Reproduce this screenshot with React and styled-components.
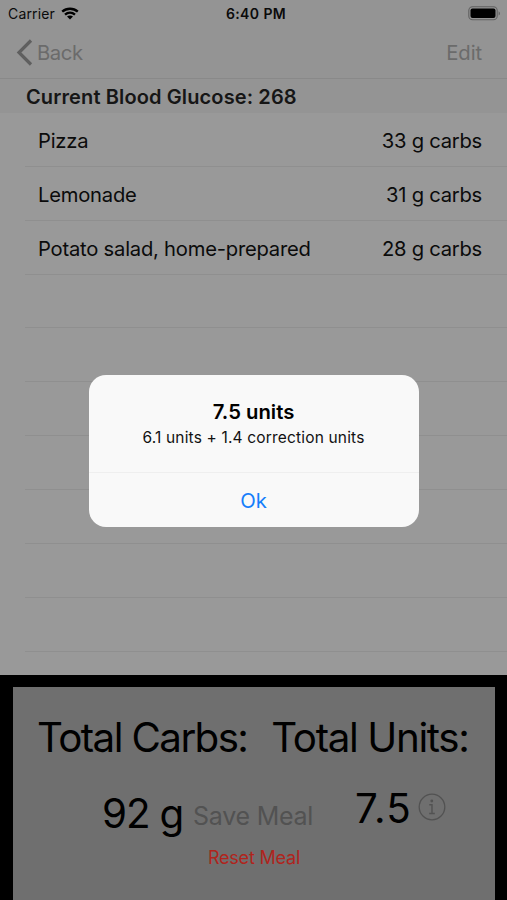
import styled, { createGlobalStyle } from "styled-components"

const GlobalStyle = createGlobalStyle`
    * {
        box-sizing: border-box;
    }
    body {
        margin: 0;
        overflow: hidden;
        font-family: "Inter", "Liberation Sans", sans-serif;
        background-color: #000;
    }
`
const Screen = styled.div`
    width: 507px;
    height: 900px;
    display: flex;
    flex-direction: column;
    position: relative;
    overflow: hidden;
    color: #0b0b0b;
    background-color: #999;
    white-space: nowrap;
`
const StatusBar = styled.div`
    height: 27px;
    display: grid;
    grid-template-columns: 1fr auto 1fr;
    align-items: center;
    padding: 0 6px 0 8px;
    background-color: #949494;
    font-size: 14px;
    line-height: 27px;
`
const Carrier = styled.div`
    display: flex;
    align-items: center;
    gap: 6px;
    letter-spacing: 0.15px;
`
const Time = styled.div`
    padding-left: 3px;
    font-size: 14px;
    font-weight: 600;
    letter-spacing: 0.4px;
`
const Battery = styled.svg`
    justify-self: end;
`
const NavBar = styled.div`
    height: 52px;
    display: flex;
    align-items: center;
    justify-content: space-between;
    padding: 0 25px 0 16px;
    border-bottom: 1px solid #898989;
    background-color: #949494;
`
const NavButton = styled.button`
    display: flex;
    align-items: center;
    gap: 4px;
    padding: 0;
    border: none;
    background: none;
    font-family: inherit;
    font-size: 20.3px;
    line-height: 50px;
    letter-spacing: ${props => props.spacing};
    color: #6b6b6b;
`
const SectionHeader = styled.div`
    height: 34px;
    flex-shrink: 0;
    padding-left: 26px;
    font-size: 20px;
    font-weight: 600;
    line-height: 36px;
    letter-spacing: 0.12px;
    color: #161616;
    background-color: #949494;
`
const List = styled.div`
    height: 562px;
    flex-shrink: 0;
    padding-left: 25px;
`
const Row = styled.div`
    height: 53.86px;
    display: flex;
    justify-content: space-between;
    padding: 1px 25px 0 13px;
    border-bottom: 1px solid #8f8f8f;
    font-size: 20.2px;
    line-height: 53px;
`
const Name = styled.span`
    letter-spacing: -0.22px;
`
const Carbs = styled.span`
    letter-spacing: -0.25px;
`
const Footer = styled.div`
    height: 225px;
    flex-shrink: 0;
    padding: 12px 12px 0 13px;
    background-color: #000;
`
const Panel = styled.div`
    height: 213px;
    display: flex;
    flex-direction: column;
    background-color: #6f6f6f;
    color: #000;
`
const Labels = styled.div`
    display: flex;
    gap: 24px;
    padding-left: 24px;
    font-size: 40.3px;
    line-height: 101px;
`
const Label = styled.span`
    letter-spacing: ${props => props.spacing};
`
const Totals = styled.div`
    height: 55px;
    display: flex;
    align-items: flex-start;
    padding-left: 89px;
`
const Value = styled.div`
    width: ${props => props.width};
    margin-top: ${props => props.top};
    font-size: 40.3px;
    line-height: 50px;
    letter-spacing: ${props => props.spacing};
`
const SaveButton = styled.button`
    width: 162px;
    padding: 3px 0 0;
    border: none;
    background: none;
    font-family: inherit;
    font-size: 25px;
    line-height: 50px;
    letter-spacing: -0.25px;
    text-align: left;
    color: #525252;
`
const InfoIcon = styled.svg`
    margin-top: 5px;
`
const ResetButton = styled.button`
    align-self: center;
    padding: 0;
    border: none;
    background: none;
    font-family: inherit;
    font-size: 18px;
    line-height: 30px;
    letter-spacing: -0.2px;
    color: #b0241d;
`
const Overlay = styled.div`
    position: absolute;
    inset: 0;
    display: flex;
    justify-content: center;
    align-items: flex-start;
    padding-top: 375px;
`
const Alert = styled.div`
    width: 330px;
    height: 151.5px;
    border-radius: 17px;
    overflow: hidden;
    background-color: #f9f9f9;
    color: #000;
    text-align: center;
`
const AlertBody = styled.div`
    height: 98px;
    padding-top: 23px;
    border-bottom: 1px solid #efefef;
`
const AlertTitle = styled.div`
    font-size: 20.3px;
    font-weight: 600;
    line-height: 28px;
    letter-spacing: 0;
`
const AlertText = styled.div`
    font-size: 15.5px;
    line-height: 24px;
    letter-spacing: 0.17px;
    color: #111;
`
const AlertButton = styled.button`
    width: 100%;
    padding: 0;
    border: none;
    background: none;
    font-family: inherit;
    font-size: 20.3px;
    line-height: 55px;
    color: #157efb;
`

const meal = [
    { name: "Pizza", carbs: 33 },
    { name: "Lemonade", carbs: 31 },
    { name: "Potato salad, home-prepared", carbs: 28 },
]
const emptyRows = [0, 1, 2, 3, 4, 5, 6]

const App = () => {
    return (
        <>
            <GlobalStyle />
            <Screen>
                <StatusBar>
                    <Carrier>
                        <span>Carrier</span>
                        <svg width="18" height="13" viewBox="0 0 18 13" fill="none" stroke="#000" strokeWidth="2.4">
                            <path d="M1.2 4.6C5.7.7 12.3.7 16.8 4.6" />
                            <path d="M4 7.6C7 5 11 5 14 7.6" />
                            <path d="M6 9.6C7.6 8.1 10.4 8.1 12 9.6L9 12.6Z" fill="#000" stroke="none" />
                        </svg>
                    </Carrier>
                    <Time>6:40 PM</Time>
                    <Battery width="33" height="15" viewBox="0 0 33 15">
                        <rect x="0.8" y="0.8" width="28.4" height="13" rx="3.8" fill="none" stroke="#606060" strokeWidth="1.1" />
                        <rect x="2.5" y="2.5" width="25" height="9.6" rx="2" fill="#000" />
                        <path d="M30.6 5.2V9.6C32.4 8.8 32.4 6 30.6 5.2Z" fill="#606060" />
                    </Battery>
                </StatusBar>
                <NavBar>
                    <NavButton spacing="-0.4px">
                        <svg width="17" height="27" viewBox="0 0 17 27" fill="none" stroke="#5f5f5f" strokeWidth="3.2">
                            <path d="M15 1.5L3 13.5L15 25.5" />
                        </svg>
                        Back
                    </NavButton>
                    <NavButton spacing="-0.1px">Edit</NavButton>
                </NavBar>
                <SectionHeader>Current Blood Glucose: 268</SectionHeader>
                <List>
                    {meal.map((item) => (
                        <Row key={item.name}>
                            <Name>{item.name}</Name>
                            <Carbs>{item.carbs} g carbs</Carbs>
                        </Row>
                    ))}
                    {emptyRows.map((row) => (
                        <Row key={row} />
                    ))}
                </List>
                <Footer>
                    <Panel>
                        <Labels>
                            <Label spacing="-1.6px">Total Carbs:</Label>
                            <Label spacing="-1.35px">Total Units:</Label>
                        </Labels>
                        <Totals>
                            <Value width="91px" top="1px" spacing="-1.1px">92 g</Value>
                            <SaveButton>Save Meal</SaveButton>
                            <Value width="63px" top="-4px" spacing="1.2px">7.5</Value>
                            <InfoIcon width="28" height="28" viewBox="0 0 28 28" fill="none" stroke="#525252">
                                <circle cx="14" cy="14" r="12.8" strokeWidth="1.3" />
                                <circle cx="13.8" cy="8" r="1.4" fill="#525252" stroke="none" />
                                <path d="M11.3 11.7H14V20.5M11.2 20.5H16.8" strokeWidth="1.4" />
                            </InfoIcon>
                        </Totals>
                        <ResetButton>Reset Meal</ResetButton>
                    </Panel>
                </Footer>
                <Overlay>
                    <Alert>
                        <AlertBody>
                            <AlertTitle>7.5 units</AlertTitle>
                            <AlertText>6.1 units + 1.4 correction units</AlertText>
                        </AlertBody>
                        <AlertButton>Ok</AlertButton>
                    </Alert>
                </Overlay>
            </Screen>
        </>
    )
}

export default App
